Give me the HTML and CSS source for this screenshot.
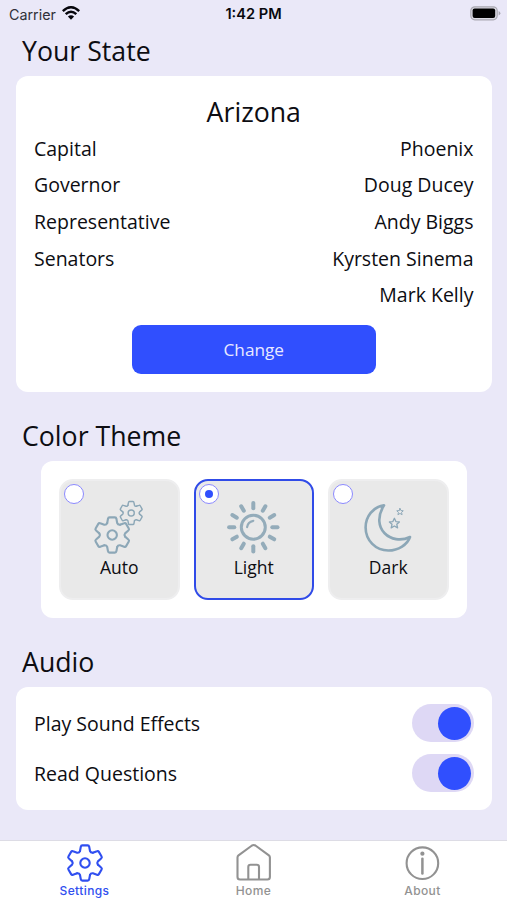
FILE: index.html
```html
<!DOCTYPE html>
<html lang="en">
<head>
<meta charset="utf-8">
<title>Settings</title>
<link rel="stylesheet" href="styles.css">
</head>
<body>
<svg class="defs" width="0" height="0" aria-hidden="true">
  <defs>
    <path id="tooth" d="M-5-12L-4.2-16.2Q-4-17.6-2.7-17.6H2.7Q4-17.6 4.2-16.2L5-12Q5.8-10 7.89-10.33"/>
    <g id="gear">
      <use href="#tooth"/>
      <use href="#tooth" transform="rotate(60)"/>
      <use href="#tooth" transform="rotate(120)"/>
      <use href="#tooth" transform="rotate(180)"/>
      <use href="#tooth" transform="rotate(240)"/>
      <use href="#tooth" transform="rotate(300)"/>
      <circle r="4.7"/>
    </g>
    <path id="ray" d="M0-19V-24.2"/>
    <path id="star" d="M0-5L1.5-1.7L5-1.4L2.4 1L3.2 4.6L0 2.7L-3.2 4.6L-2.4 1L-5-1.4L-1.5-1.7Z"/>
  </defs>
</svg>
<div class="screen">
  <header class="status">
    <div class="carrier"><span>Carrier</span>
      <svg width="18" height="14" viewBox="0 0 18 14" fill="none" stroke="#06060c" stroke-width="2.5">
        <path d="M.8 5.1Q9-2.5 17.2 5.1M3.7 8.2Q9 3.3 14.3 8.2"/>
        <path d="M9 13.7L5.9 10.5Q9 7.9 12.1 10.5Z" fill="#06060c" stroke="none"/>
      </svg>
    </div>
    <div class="time">1:42 PM</div>
    <svg class="battery" width="31" height="15" viewBox="0 0 31 15">
      <rect x=".8" y=".8" width="26.4" height="13" rx="4" fill="#dcdbe4" stroke="#a9a8b1" stroke-width="1.2"/>
      <rect x="2.6" y="2.6" width="22.6" height="9.4" rx="2" fill="#000"/>
      <path d="M28.6 5Q30.4 5.8 30.4 7.3T28.6 9.6Z" fill="#a9a8b1"/>
    </svg>
  </header>
  <main>
    <h2>Your State</h2>
    <section class="card state">
      <h3>Arizona</h3>
      <dl>
        <dt>Capital</dt><dd>Phoenix</dd>
        <dt>Governor</dt><dd>Doug Ducey</dd>
        <dt>Representative</dt><dd>Andy Biggs</dd>
        <dt>Senators</dt><dd>Kyrsten Sinema</dd>
        <dd>Mark Kelly</dd>
      </dl>
      <button class="change">Change</button>
    </section>
    <h2 class="theme-title">Color Theme</h2>
    <section class="card themes">
      <div class="tile">
        <i class="radio"></i>
        <svg width="60" height="60" viewBox="0 0 60 60" fill="none" stroke="#8ca7b7" stroke-linecap="round" stroke-linejoin="round">
          <use href="#gear" transform="translate(23.2 37)" stroke-width="2.1"/>
          <use href="#gear" transform="translate(42.2 15) scale(.65)" stroke-width="2.2"/>
        </svg>
        <span>Auto</span>
      </div>
      <div class="tile selected">
        <i class="radio"></i>
        <svg width="60" height="60" viewBox="0 0 60 60" fill="none" stroke="#94acba" stroke-linecap="round">
          <g transform="translate(29.3 29.2)" stroke-width="4">
            <use href="#ray"/><use href="#ray" transform="rotate(30)"/><use href="#ray" transform="rotate(60)"/>
            <use href="#ray" transform="rotate(90)"/><use href="#ray" transform="rotate(120)"/><use href="#ray" transform="rotate(150)"/>
            <use href="#ray" transform="rotate(180)"/><use href="#ray" transform="rotate(210)"/><use href="#ray" transform="rotate(240)"/>
            <use href="#ray" transform="rotate(270)"/><use href="#ray" transform="rotate(300)"/><use href="#ray" transform="rotate(330)"/>
            <circle r="12" stroke-width="3"/>
            <path d="M-6.2 0Q-5.6-5.4 0-6.4" stroke-width="2.2"/>
          </g>
        </svg>
        <span>Light</span>
      </div>
      <div class="tile">
        <i class="radio"></i>
        <svg width="60" height="60" viewBox="0 0 60 60" fill="none" stroke="#8ca7b7" stroke-linecap="round" stroke-linejoin="round">
          <path d="M26 7.3C15 9 7.6 18.5 7.6 29.500C7.6 42.500 17.800 52.500 30.300 52.500C40.500 52.500 49.500 46.500 52 39C33.500 48 11.500 30.500 26 7.300Z" stroke-width="2.6"/>
          <use href="#star" transform="translate(36.400 25.300)" stroke-width="1.300"/>
          <use href="#star" transform="translate(42 13.700) scale(.65)" stroke-width="1.500"/>
        </svg>
        <span>Dark</span>
      </div>
    </section>
    <h2 class="audio-title">Audio</h2>
    <section class="card audio">
      <div class="option"><span>Play Sound Effects</span><i class="toggle"></i></div>
      <div class="option"><span>Read Questions</span><i class="toggle"></i></div>
    </section>
  </main>
  <nav>
    <a class="active">
      <svg width="40" height="40" viewBox="-20 -20 40 40" fill="none" stroke="currentColor" stroke-width="2.1" stroke-linecap="round" stroke-linejoin="round"><use href="#gear"/></svg>
      <span>Settings</span>
    </a>
    <a>
      <svg width="40" height="40" viewBox="-20 -20 40 40" fill="none" stroke="currentColor" stroke-width="2.1" stroke-linejoin="round"><path d="M-16.500-5.500Q-16.500-6.800-15.500-7.600L-2-17.500Q-.3-18.600 1.400-17.500L14.900-7.600Q15.900-6.800 15.900-5.500V14Q15.900 16.500 13.400 16.500H5V4Q5 1.800 2.800 1.800H-3.500Q-5.700 1.800-5.700 4V16.500H-14Q-16.500 16.500-16.500 14ZM-6 16.500H6"/></svg>
      <span>Home</span>
    </a>
    <a>
      <svg width="40" height="40" viewBox="-20 -20 40 40" fill="none" stroke="currentColor" stroke-width="2.1" stroke-linecap="round"><g transform="translate(-.6 .2)"><circle r="15.800"/><path d="M0-4.500V10.200" stroke-width="2.500"/><circle cy="-9.500" r="2.100" fill="currentColor" stroke="none"/></g></svg>
      <span>About</span>
    </a>
  </nav>
</div>
</body>
</html>
```
FILE: styles.css
```css
* { box-sizing: border-box; }
body { margin: 0; background: #eae8f8; color: #0d0d12; font-family: "Open Sans", "Noto Sans", sans-serif; }
.defs { position: absolute; }
.screen { width: 507px; height: 900px; display: flex; flex-direction: column; overflow: hidden; }
.status { height: 28px; flex: none; display: grid; grid-template-columns: 1fr auto 1fr; align-items: center; padding: 0 6px 0 9px; font-family: Inter, sans-serif; font-size: 14.3px; }
.carrier { display: flex; align-items: center; gap: 6px; color: #303038; }
.carrier svg { margin-top: -2px; }
.time { font-weight: 600; font-size: 14.6px; color: #08080e; margin-left: -3px; }
.battery { justify-self: end; margin-top: -1px; }
main { flex: 1; padding: 0 15.5px 0 16px; }
h2, h3 { margin: 0; font-weight: 400; font-size: 26.7px; line-height: 36px; }
h2 { height: 48px; padding: 5px 0 0 6px; }
.card { background: #fff; border-radius: 12px; }
.state { height: 316px; padding: 18px 18px 0; display: flex; flex-direction: column; align-items: center; }
dl { margin: 0; width: 100%; display: grid; grid-template-columns: auto 1fr; grid-auto-rows: 36.6px; align-items: center; font-size: 19.5px; }
dd { margin: 0; grid-column: 2; text-align: right; }
.change { margin-top: 12.5px; width: 244px; height: 49px; border: 0; border-radius: 9px; background: #304ffe; color: #e9e9ff; font: 17.2px "Open Sans", sans-serif; }
.theme-title { margin-top: 21px; height: 48px; }
.themes { width: 426px; height: 157px; margin: 0 auto; padding: 18px; display: flex; gap: 14px; justify-content: center; }
.tile { position: relative; width: 120.5px; height: 121px; border: 2px solid #eeeeef; border-radius: 14px; background: #e9e9e9; display: flex; flex-direction: column; align-items: center; padding-top: 17px; font-size: 17.5px; line-height: 24px; }
.tile.selected { border-color: #304be8; }
.tile span { margin-top: -3px; }
.radio { position: absolute; top: 3px; left: 3px; width: 20px; height: 20px; border: 1px solid #8b89ff; border-radius: 50%; background: #fff; }
.selected .radio::after { content: ""; display: block; width: 8px; height: 8px; margin: 5px; border-radius: 50%; background: #304ffe; }
.audio-title { margin-top: 21px; }
.audio { height: 123px; padding: 11px 18px; font-size: 19.5px; }
.option { height: 50px; display: flex; justify-content: space-between; align-items: center; }
.toggle { width: 62px; height: 38px; border-radius: 19px; padding: 2.5px; background: #ded8f5; display: flex; justify-content: flex-end; }
.toggle::after { content: ""; width: 33px; height: 33px; border-radius: 50%; background: #304ffe; }
nav { flex: none; height: 60px; background: #fff; border-top: 1px solid #dddce5; display: grid; grid-template-columns: repeat(3, 1fr); }
nav a { display: flex; flex-direction: column; align-items: center; padding-top: 2px; color: #929292; font: 500 12px/16px Inter, sans-serif; letter-spacing: .4px; }
nav svg { flex: none; }
nav .active { color: #304ff0; }
```
